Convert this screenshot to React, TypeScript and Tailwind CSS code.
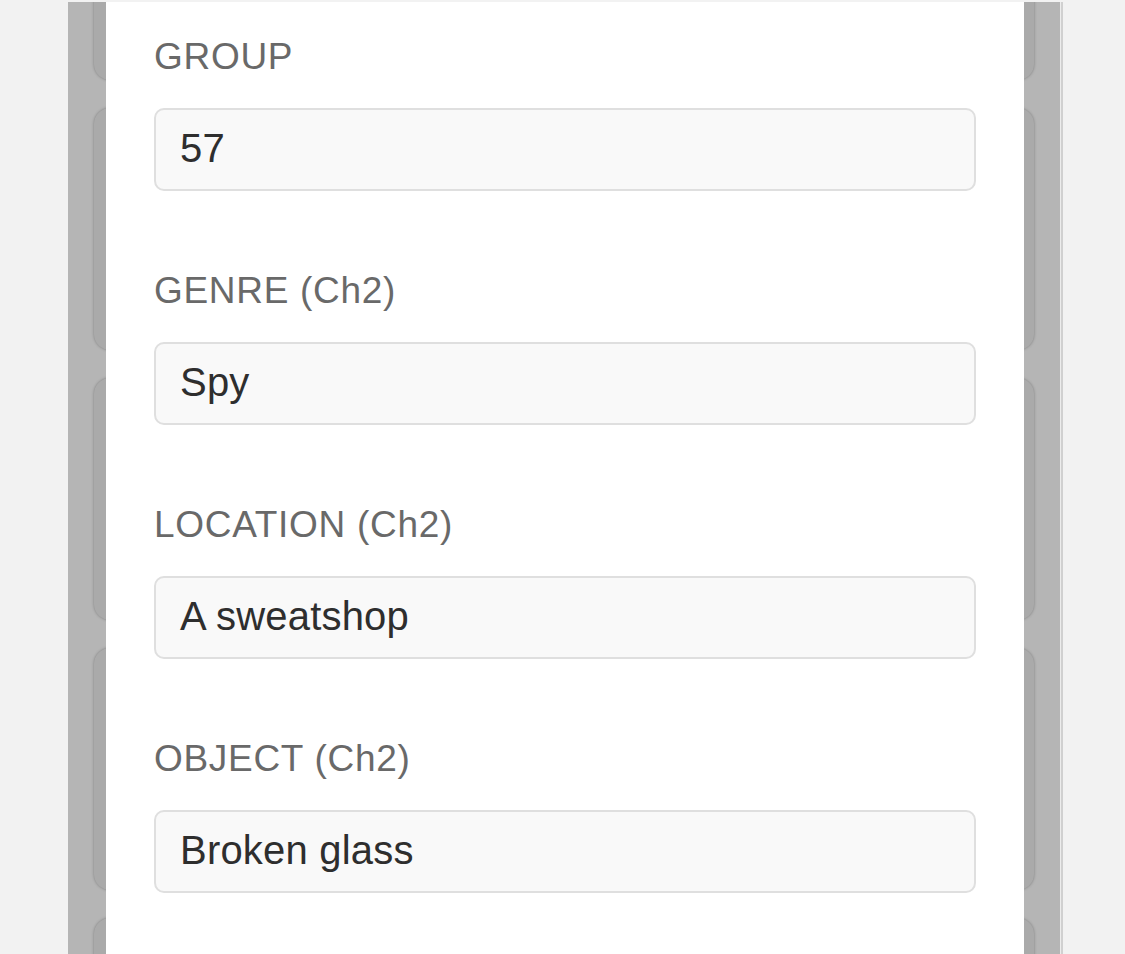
import React from "react";

interface Field {
    label: string;
    value: string;
}

const fields: Field[] = [
    {label: "GROUP", value: "57"},
    {label: "GENRE (Ch2)", value: "Spy"},
    {label: "LOCATION (Ch2)", value: "A sweatshop"},
    {label: "OBJECT (Ch2)", value: "Broken glass"}
];

const rows = [0, 1, 2, 3, 4, 5];

const FieldRow = ({label, value}: Field) => (
    <div className="flex flex-col">
        <div className="text-[37px] leading-[44px] text-[#696969] tracking-[0.7px]">
            {label}
        </div>
        <div className="mt-[29px] h-[83px] flex items-center pl-[24px] pb-[3px] bg-[#f9f9f9] border-2 border-[#dfdfdf] rounded-[10px] text-[40px] text-[#2e2e2e] tracking-[0.2px]">
            {value}
        </div>
    </div>
);

export default function App() {
    return (
        <div
            className="w-[1125px] h-[954px] overflow-hidden bg-[#f2f2f2] flex"
            style={{fontFamily: '"Liberation Sans", Arial, sans-serif'}}>
            <div className="relative ml-[68px] mt-[2px] w-[995px] flex overflow-hidden">
                {/* dimmed list behind the sheet */}
                <div className="w-[992px] bg-[#b5b5b5] px-[26px] flex flex-col gap-[28px] -mt-[164px]">
                    {rows.map((r) => (
                        <div
                            key={r}
                            className="h-[242px] shrink-0 rounded-[16px] bg-[#aaaaaa] shadow-[0_0_3px_rgba(0,0,0,0.3)]"
                        />
                    ))}
                </div>
                <div className="w-[1px] bg-[#ececec]" />
                <div className="w-[2px] bg-[#d0d0d0]" />

                {/* sheet */}
                <div className="absolute top-0 bottom-0 left-[38px] w-[918px] bg-white px-[48px] pt-[33px] flex flex-col gap-[78px]">
                    {fields.map((f) => (
                        <FieldRow key={f.label} label={f.label} value={f.value} />
                    ))}
                </div>
            </div>
        </div>
    );
}
